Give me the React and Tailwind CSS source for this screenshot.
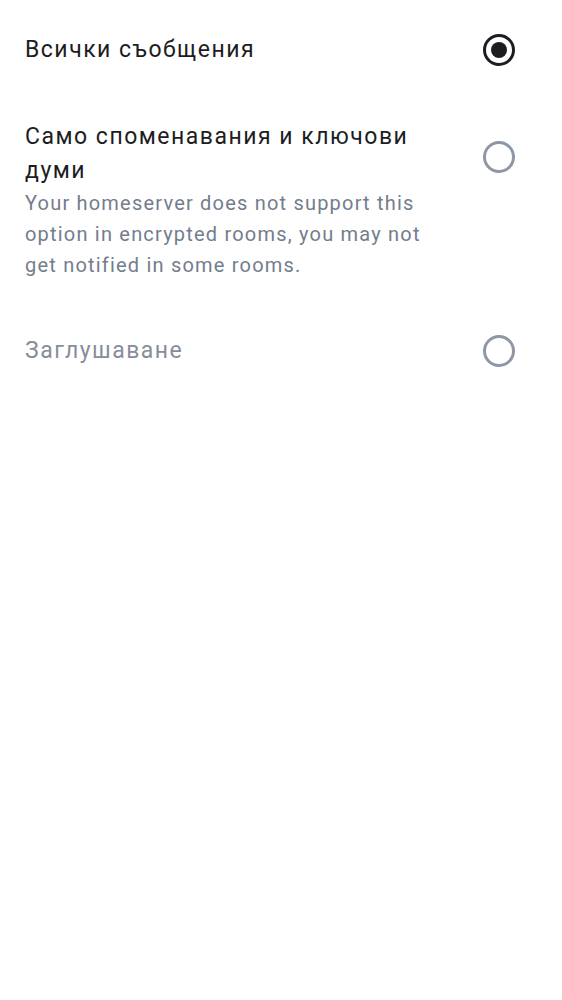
import React, { useState } from 'react';

const options = [
  { id: 'all', label: 'Всички съобщения' },
  {
    id: 'mentions',
    label: 'Само споменавания и ключови думи',
    hint: 'Your homeserver does not support this option in encrypted rooms, you may not get notified in some rooms.',
  },
  { id: 'mute', label: 'Заглушаване', muted: true },
];

const Radio = ({ checked }) => (
  <span
    className={`w-[32px] h-[32px] rounded-full border-[3px] flex items-center justify-center shrink-0 ${
      checked ? 'border-[#1b1d22]' : 'border-[#8d97a5]'
    }`}
  >
    {checked && <span className="w-[16px] h-[16px] rounded-full bg-[#1b1d22]" />}
  </span>
);

export default function App() {
  const [selected, setSelected] = useState('all');

  return (
    <div
      className="min-h-[1000px] w-full bg-white pt-[33px] flex flex-col gap-[53px]"
      style={{ fontFamily: 'Roboto, "Noto Sans", sans-serif' }}
    >
      {options.map((option) => (
        <button
          key={option.id}
          onClick={() => setSelected(option.id)}
          className="w-full pl-[25px] pr-[47px] flex items-start justify-between text-left"
        >
          <div className="w-[415px]">
            <p
              className={`text-[23px] leading-[34px] tracking-[1.5px] ${
                option.muted ? 'text-[#868e99]' : 'text-[#1b1d22]'
              }`}
            >
              {option.label}
            </p>
            {option.hint && (
              <p className="text-[20px] leading-[31px] text-[#737d8c] tracking-[1.2px]">{option.hint}</p>
            )}
          </div>
          <span className={option.hint ? 'mt-[21px]' : 'mt-px'}>
            <Radio checked={selected === option.id} />
          </span>
        </button>
      ))}
    </div>
  );
}
